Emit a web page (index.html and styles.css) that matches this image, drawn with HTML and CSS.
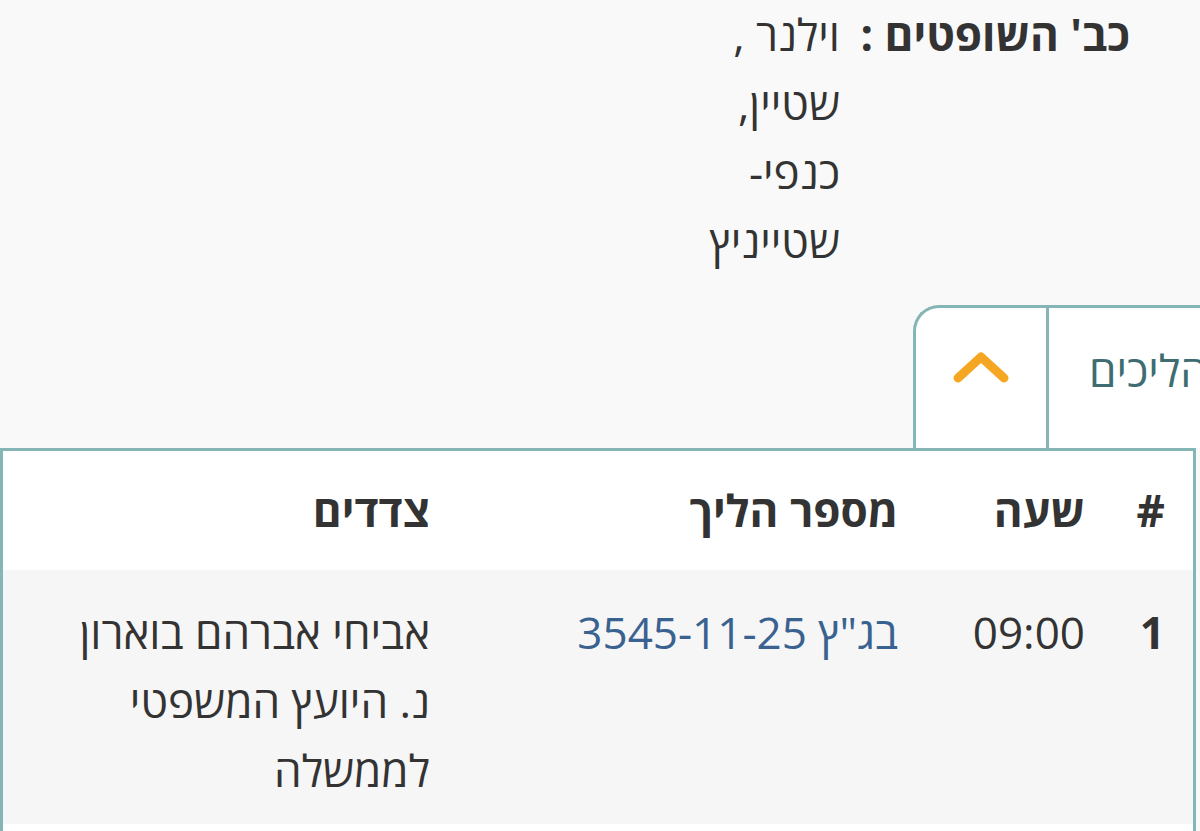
FILE: index.html
```
<!DOCTYPE html>
<html lang="he" dir="rtl">
<head>
  <meta charset="UTF-8">
  <meta name="viewport" content="width=device-width, initial-scale=1.0">
  <link rel="stylesheet" href="styles.css">
  <title>הליכים</title>
</head>
<body>
  <div class="judges">
    <span class="judges-label">כב' השופטים :</span>
    <div class="judges-names">
      <div>וילנר ,</div>
      <div>שטיין,</div>
      <div>כנפי-</div>
      <div>שטייניץ</div>
    </div>
  </div>

  <div class="tabs">
    <button class="tab-toggle" type="button" aria-label="סגור">
      <svg width="64" height="40" viewBox="0 0 64 40">
        <path d="M9 27 L32 6 L55 27" fill="none" stroke="#f5a623" stroke-width="9" stroke-linecap="round" stroke-linejoin="round"/>
      </svg>
    </button>
    <div class="tab-title">הליכים</div>
  </div>

  <div class="cases">
    <div class="cases-row cases-head">
      <div class="cell">#</div>
      <div class="cell">שעה</div>
      <div class="cell">מספר הליך</div>
      <div class="cell">צדדים</div>
    </div>
    <div class="cases-row cases-item">
      <div class="cell cell-num">1</div>
      <div class="cell">09:00</div>
      <div class="cell"><a class="case-link" href="#">בג"ץ 3545-11-25</a></div>
      <div class="cell cell-parties">אביחי אברהם בוארון נ. היועץ המשפטי לממשלה</div>
    </div>
  </div>
</body>
</html>
```

FILE: styles.css
```
:root {
  --bg-color: #f9f9f9;
  --row-color: #f6f6f6;
  --line-color: #86b5b5;
  --text-color: #333333;
}

body {
  background-color: var(--bg-color);
  color: var(--text-color);
  direction: rtl;
  font-family: "Open Sans", "DejaVu Sans", sans-serif;
  font-size: 44px;
  line-height: 69px;
  margin: 0px;
  overflow: hidden;
  padding: 0px;
}

.judges {
  display: flex;
  gap: 18px;
  padding-right: 70px;
}

.judges-label {
  font-weight: 700;
  white-space: nowrap;
  width: 272px;
}

/* tab sitting on the table border */
.tabs {
  direction: ltr;
  display: flex;
  margin-left: 913px;
  margin-top: 29px;
}

.tab-toggle {
  align-items: flex-start;
  background-color: #ffffff;
  border: none;
  border-left: 3px solid var(--line-color);
  border-top: 3px solid var(--line-color);
  border-top-left-radius: 26px;
  display: flex;
  flex: none;
  height: 143px;
  justify-content: center;
  padding: 43px 0px 0px 0px;
  width: 133px;
}

.tab-title {
  background-color: #ffffff;
  border-left: 3px solid var(--line-color);
  border-top: 3px solid var(--line-color);
  color: #3e6c70;
  flex: 1;
  min-width: 0;
  padding: 28px 0px 43px 40px;
  white-space: nowrap;
}

.cases {
  background-color: #ffffff;
  border: 3px solid var(--line-color);
  margin-right: 4px;
  padding-bottom: 40px;
}

.cases-row {
  display: grid;
  grid-template-columns: 80px 187px 468px 1fr;
}

.cases-head {
  font-weight: 700;
}

.cases-head > .cell {
  padding: 25px 28px;
}

.cases-item {
  background-color: var(--row-color);
}

.cases-item > .cell {
  padding: 28px 28px 19px;
}

.cases-item > .cell-parties {
  padding-left: 40px;
}

.cell-num {
  font-weight: 700;
}

.case-link {
  color: #3a6290;
  text-decoration: none;
}
```
